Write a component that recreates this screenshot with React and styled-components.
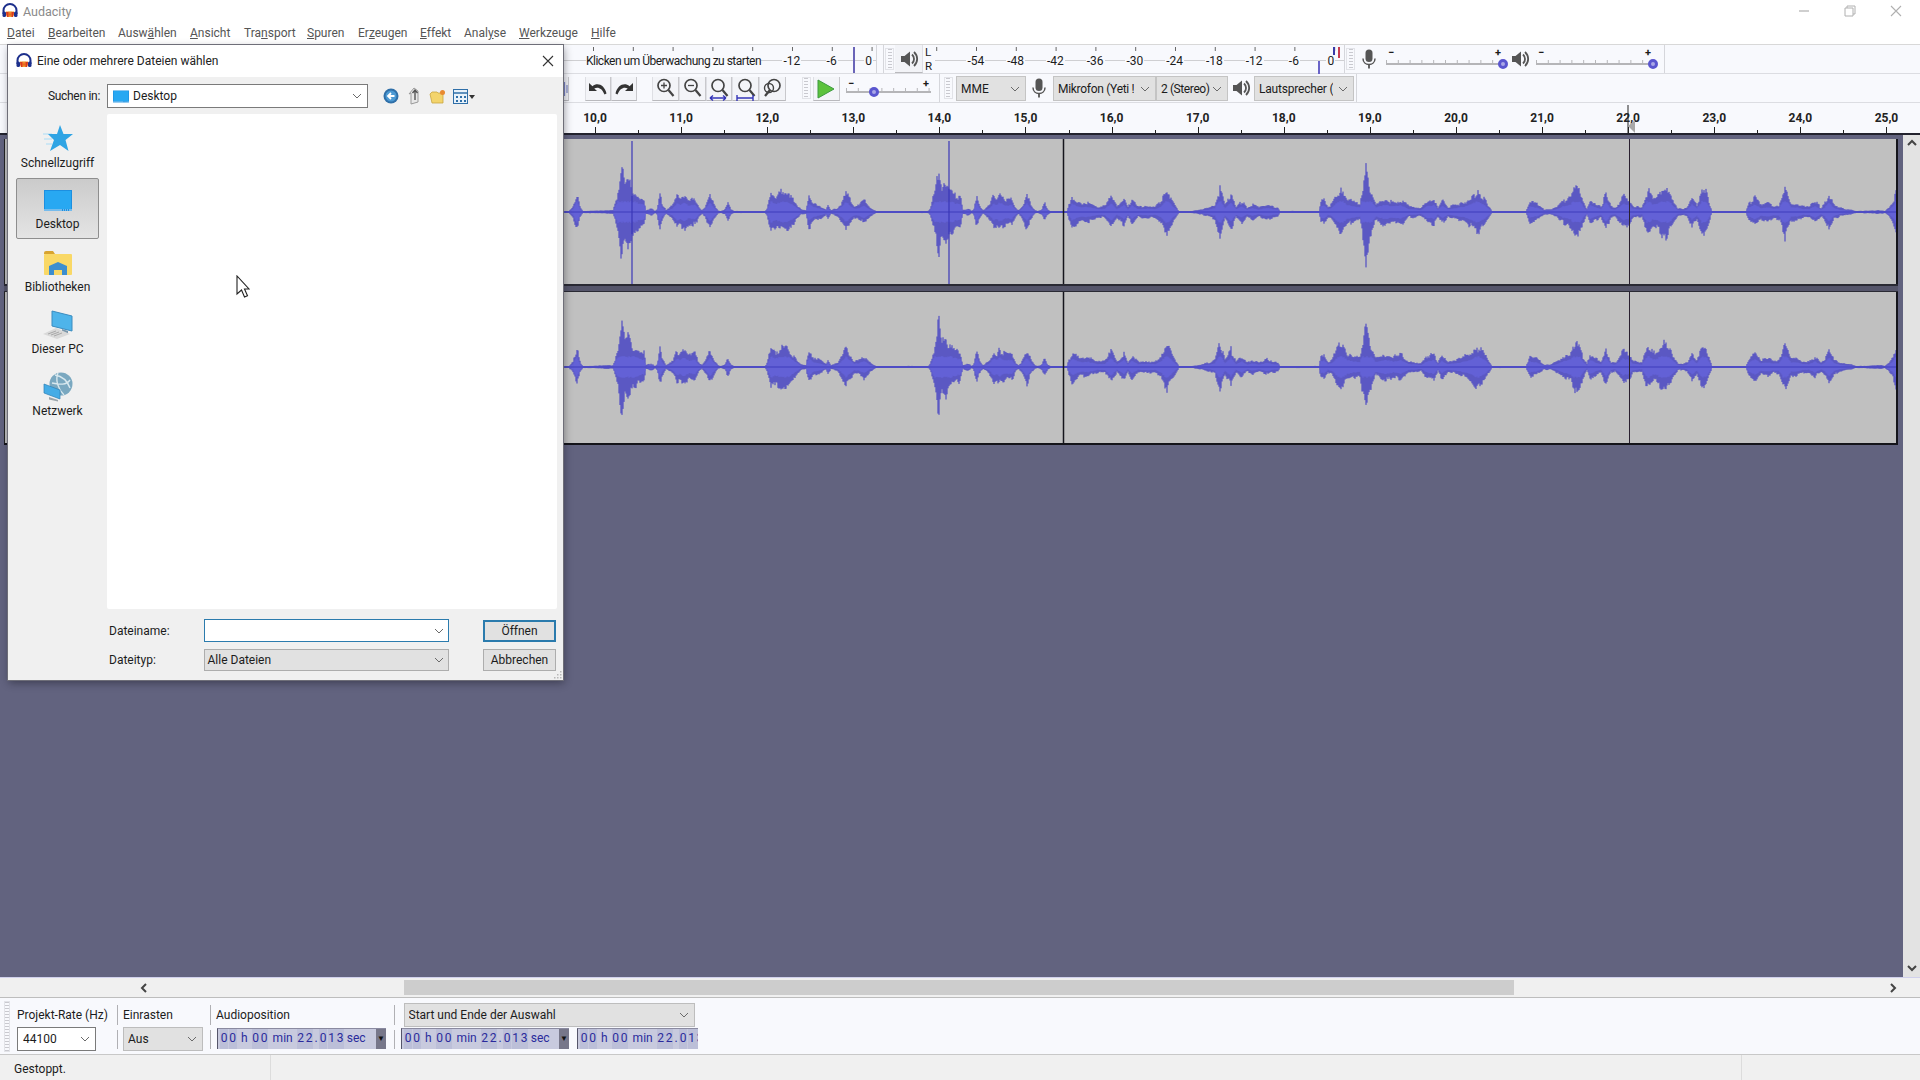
import React from "react";
import styled, { createGlobalStyle } from "styled-components";

const GlobalStyle = createGlobalStyle`
  html, body {
    margin: 0;
    padding: 0;
    width: 1920px;
    height: 1080px;
    overflow: hidden;
  }
  * {
    box-sizing: border-box;
  }
  body {
    font-family: Roboto, "Liberation Sans", sans-serif;
    font-size: 12px;
    color: #1c1c1c;
  }
`;

const MENU = [
  ["", "D", "atei", 41],
  ["", "B", "earbeiten", 70],
  ["Ausw", "ä", "hlen", 72],
  ["", "A", "nsicht", 54],
  ["Tra", "n", "sport", 63],
  ["", "S", "puren", 51],
  ["Er", "z", "eugen", 62],
  ["", "E", "ffekt", 44],
  ["Anal", "y", "se", 55],
  ["", "W", "erkzeuge", 72],
  ["", "H", "ilfe", 30],
];

const RULER = Array.from({ length: 16 }, (_, i) => `${i + 10},0`);
const PLAY_SCALE = ["-54", "-48", "-42", "-36", "-30", "-24", "-18", "-12", "-6"];

// waveform envelope: [x on screen, peak height]
const BLOCK_A = [
  [612, 2], [614, 9], [618, 28], [621, 55], [624, 27], [627, 38], [631, 24], [636, 20], [640, 17], [643, 16],
  [645, 2], [648, 3], [650, 4], [652, 3], [654, 1], [656, 3], [659, 20], [661, 10], [665, 2], [668, 4], [672, 8],
  [676, 18], [679, 15], [682, 20], [688, 14], [694, 15], [698, 5], [701, 2], [704, 6], [709, 19], [713, 9],
  [717, 2], [720, 1], [724, 3], [727, 10], [730, 3], [733, 1],
];
const BLOCK_B = [
  [764, 1], [766, 4], [770, 23], [775, 18], [780, 22], [787, 22], [793, 13], [800, 3], [805, 2], [808, 18],
  [813, 10], [820, 7], [825, 3], [827, 8], [830, 2], [837, 5], [841, 12], [845, 22], [849, 14], [853, 7], [858, 8],
  [863, 13], [869, 5], [875, 1],
];
const BLOCK_C = [
  [1066, 1], [1068, 8], [1071, 17], [1080, 10], [1087, 11], [1097, 6], [1104, 7], [1110, 18], [1116, 6], [1123, 15],
  [1127, 5], [1131, 14], [1137, 6], [1142, 7], [1148, 7], [1154, 6], [1160, 12], [1166, 25], [1172, 12], [1178, 1],
  [1190, 1], [1197, 2], [1208, 5], [1214, 8], [1219, 27], [1224, 8], [1230, 20], [1235, 6], [1241, 12], [1246, 5],
  [1252, 8], [1258, 5], [1266, 9], [1272, 6], [1277, 5], [1279, 1], [1318, 1], [1320, 12], [1323, 14], [1327, 6], [1331, 9],
  [1340, 27], [1346, 15], [1353, 12], [1359, 10], [1362, 30], [1365, 53], [1368, 30], [1375, 10], [1384, 15],
  [1392, 12], [1400, 14], [1408, 6], [1414, 6], [1420, 4], [1426, 12], [1433, 15], [1437, 5], [1441, 13], [1447, 6],
  [1455, 8], [1462, 11], [1470, 16], [1477, 23], [1484, 14], [1491, 1], [1525, 1], [1529, 12], [1536, 9], [1543, 3],
  [1550, 3], [1556, 6], [1562, 12], [1570, 16], [1576, 35], [1582, 12], [1586, 3], [1589, 15], [1594, 10], [1600, 6],
  [1605, 20], [1610, 6], [1614, 5], [1619, 12], [1622, 18], [1628, 15], [1632, 7], [1636, 6], [1641, 5], [1647, 25],
  [1652, 16], [1657, 18], [1663, 30], [1669, 20], [1677, 4], [1682, 3], [1686, 5], [1691, 16], [1696, 8], [1703, 28],
  [1708, 12], [1711, 1], [1745, 1], [1748, 10], [1754, 16], [1760, 8], [1767, 10], [1772, 7], [1778, 8], [1784, 28],
  [1790, 10], [1795, 10], [1802, 6], [1808, 6], [1814, 12], [1820, 5], [1824, 10], [1828, 20], [1833, 8], [1839, 5],
  [1845, 3], [1850, 3], [1855, 1], [1880, 2], [1884, 1], [1888, 5], [1892, 12], [1896, 26],
];
const ENVELOPE = [
  [563, 1], [568, 1], [572, 6], [576, 22], [579, 6], [582, 1],
  ...BLOCK_A,
  ...BLOCK_B,
  [926, 1],
  ...BLOCK_A.map(([x, a]) => [x + 316.7, a]),
  [1062, 1],
  ...BLOCK_C,
];

const peakAt = (x) => {
  for (let i = 1; i < ENVELOPE.length; i++) {
    const [x0, a0] = ENVELOPE[i - 1];
    const [x1, a1] = ENVELOPE[i];
    if (x <= x1) return a0 + ((a1 - a0) * (x - x0)) / (x1 - x0 || 1);
  }
  return 1;
};

const noise = (x, seed) => {
  const v = Math.sin(x * 12.9898 + seed * 78.233) * 43758.5453;
  return v - Math.floor(v);
};

// jagged edge: a coarse wobble over every 3px plus a fine one per column
const wobble = (x, seed) => 0.62 + 0.28 * noise(Math.floor(x / 3), seed) + 0.18 * noise(x, seed + 5);

const buildWave = (mid, seed) => {
  let dark = "";
  let light = "";
  for (let x = 560; x < 1893; x++) {
    const peak = peakAt(x + 4);
    const up = Math.max(1, peak * wobble(x, seed));
    const down = Math.max(1, peak * wobble(x + 40, seed));
    dark += `M${x} ${(mid - up).toFixed(1)}V${(mid + down).toFixed(1)}`;
    const inner = Math.min(peak * 0.5, 11) * (0.85 + 0.15 * noise(x + 7, seed));
    if (inner > 1) light += `M${x} ${(mid - inner).toFixed(1)}V${(mid + inner).toFixed(1)}`;
  }
  return { dark, light };
};

const Page = styled.div`
  position: relative;
  width: 1920px;
  height: 1080px;
  display: flex;
  flex-direction: column;
  overflow: hidden;
  background: #f8f9fd;
`;

const TitleBar = styled.div`
  flex: none;
  height: 22px;
  display: flex;
  align-items: center;
  padding-left: 2px;
  background: #fff;
`;

const AppTitle = styled.span`
  margin-left: 5px;
  color: #8a8a8a;
  font-size: 12.5px;
`;

const WindowButtons = styled.div`
  margin-left: auto;
  display: flex;
  align-items: center;
`;

const WindowButton = styled.div`
  width: 46px;
  display: flex;
  justify-content: center;
  padding-right: 2px;
`;

const MenuBar = styled.div`
  flex: none;
  height: 23px;
  display: flex;
  align-items: center;
  padding-left: 7px;
  background: #fff;
  border-bottom: 1px solid #d8d8d8;
`;

const MenuItem = styled.span`
  flex: none;
  width: ${(p) => p.$w}px;
  color: #555;
  font-size: 12px;
  white-space: nowrap;
`;

const ToolRow = styled.div`
  flex: none;
  height: ${(p) => p.$h || 29}px;
  display: flex;
  align-items: stretch;
  border-bottom: 1px solid #dcdde2;
  background: #f8f9fd;
`;

const Meter = styled.div`
  position: relative;
  flex: none;
  display: flex;
  align-items: center;
  margin-left: ${(p) => p.$left || 0}px;
  width: ${(p) => p.$w}px;
  padding-left: ${(p) => p.$pad || 0}px;
  height: 100%;
  padding-top: 3px;
  &::before {
    content: "";
    position: absolute;
    left: 0;
    right: 0;
    top: 15px;
    height: 1px;
    background: #cfcfd2;
  }
  &::after {
    content: "";
    position: absolute;
    left: 0;
    right: 0;
    top: 2px;
    height: 4px;
    background: linear-gradient(90deg, #666 1px, transparent 1px) ${(p) => p.$tick}px 0 / 39.8px 4px repeat-x;
  }
`;

const MeterHint = styled.span`
  position: relative;
  z-index: 1;
  flex: none;
  width: ${(p) => p.$w}px;
  white-space: nowrap;
`;

const MeterHintText = styled.span`
  background: #f8f9fd;
  letter-spacing: -0.5px;
`;

const MeterCell = styled.span`
  position: relative;
  z-index: 1;
  flex: none;
  width: ${(p) => p.$w || 39.75}px;
  padding-left: ${(p) => p.$pad || 0}px;
  text-align: center;
`;

const MeterNumber = styled.span`
  background: #f8f9fd;
  padding: 0 1px;
`;

const LevelBar = styled.div`
  position: absolute;
  z-index: 2;
  left: ${(p) => p.$x}px;
  top: ${(p) => p.$y}px;
  width: 2px;
  height: ${(p) => p.$h}px;
  background: ${(p) => p.$color};
`;

const Divider = styled.div`
  flex: none;
  width: 1px;
  background: #d5d6db;
  margin-left: ${(p) => p.$left || 0}px;
`;

const Grip = styled.div`
  flex: none;
  width: 9px;
  margin: 3px 0 3px ${(p) => p.$left || 0}px;
  border: 1px solid #e2e3e8;
  background: repeating-linear-gradient(180deg, #c9c9cf 0 1px, transparent 1px 3px) center / 4px 100% no-repeat;
`;

const IconSlot = styled.div`
  flex: none;
  width: ${(p) => p.$w}px;
  margin-left: ${(p) => p.$left || 0}px;
  display: flex;
  align-items: center;
  justify-content: center;
`;

const SpeakerButton = styled(IconSlot)`
  background: #f2f3f7;
  border-bottom: 1px solid #b9b9bd;
  border-right: 1px solid #dedfe4;
`;

const ChannelLabels = styled.div`
  flex: none;
  width: 10px;
  margin-left: 2px;
  display: flex;
  flex-direction: column;
  justify-content: space-between;
  padding: 0 0 1px;
  font-size: 11.5px;
  line-height: 14px;
`;

const SliderBox = styled.div`
  position: relative;
  flex: none;
  width: ${(p) => p.$w}px;
  margin-left: ${(p) => p.$left || 0}px;
  &::before {
    content: "";
    position: absolute;
    left: 0;
    right: 0;
    top: ${(p) => p.$line}px;
    height: 2px;
    background: #b5b5b8;
  }
  &::after {
    content: "";
    position: absolute;
    left: 0;
    right: 0;
    top: ${(p) => p.$line - 3}px;
    height: 3px;
    background: linear-gradient(90deg, #b5b5b8 1px, transparent 1px) 0 0 / 11.8px 3px repeat-x;
  }
`;

const SliderMark = styled.span`
  position: absolute;
  top: ${(p) => p.$top}px;
  ${(p) => (p.$end ? "right: 2px;" : "left: 2px;")}
  font-size: 11px;
  line-height: 11px;
  font-weight: 700;
`;

const SliderThumb = styled.div`
  position: absolute;
  z-index: 1;
  left: ${(p) => p.$x}px;
  top: ${(p) => p.$line - 4}px;
  width: 10px;
  height: 10px;
  border-radius: 50%;
  border: 3px solid #5a56cf;
  background: #a9a7e6;
`;

const ToolButton = styled.div`
  flex: none;
  width: ${(p) => p.$w || 26.8}px;
  margin: 3px 0 1px ${(p) => p.$left || 0}px;
  display: flex;
  align-items: center;
  justify-content: ${(p) => (p.$edge ? "flex-end" : "center")};
  background: #f3f4f8;
  border-right: 1px solid #c8c8cc;
  border-left: 1px solid #dedfe4;
  border-bottom: 1px solid #b9b9bd;
`;

const Combo = styled.div`
  flex: none;
  width: ${(p) => p.$w}px;
  height: ${(p) => p.$h || 24}px;
  margin-left: ${(p) => p.$left || 0}px;
  margin-top: ${(p) => p.$top || 0}px;
  align-self: center;
  display: flex;
  align-items: center;
  justify-content: space-between;
  gap: 2px;
  padding: 0 5px 0 ${(p) => p.$pad || 4}px;
  background: ${(p) => p.$bg || "#e1e1e1"};
  border: 1px solid ${(p) => p.$line || "#c4c4c4"};
  white-space: nowrap;
  overflow: hidden;
  font-size: 12px;
  svg {
    flex: none;
  }
`;

const ComboText = styled.span`
  overflow: hidden;
  letter-spacing: ${(p) => p.$tight || 0}px;
`;

const Ruler = styled.div`
  position: relative;
  flex: none;
  height: 30px;
  display: flex;
  padding-left: 552px;
  overflow: hidden;
  background: #f8f9fd;
`;

const RulerCell = styled.div`
  position: relative;
  flex: none;
  width: 86.1px;
  padding-top: 8px;
  text-align: center;
  font-weight: 700;
  font-size: 12px;
  line-height: 14px;
  color: #222;
  &::before {
    content: "";
    position: absolute;
    left: 0;
    bottom: 0;
    width: 1px;
    height: 3px;
    background: #222;
  }
  &::after {
    content: "";
    position: absolute;
    left: 43px;
    bottom: 0;
    width: 1px;
    height: 6px;
    background: #222;
  }
`;

const Playhead = styled.svg`
  position: absolute;
  left: 1627px;
  top: 2px;
`;

const TrackArea = styled.div`
  flex: none;
  height: 845px;
  display: flex;
  background: #62637f;
  border-top: 2px solid #23232e;
  border-bottom: 1px solid #d0d0ec;
`;

const TrackColumn = styled.div`
  flex: none;
  width: 1903px;
  padding: 4px 5px 0 4px;
`;

const Track = styled.div`
  height: ${(p) => p.$h}px;
  background: #c0c0c0;
  border-left: 1px solid #222;
  border-right: 2px solid #15151c;
`;

const TrackGap = styled.div`
  height: 8px;
  background: #55556a;
  border-top: 2px solid #2a2a34;
  border-bottom: 1px solid #2a2a34;
`;

const TrackEnd = styled.div`
  height: 2px;
  background: #14141a;
`;

const Wave = styled.svg`
  display: block;
`;

const VScroll = styled.div`
  flex: none;
  width: 17px;
  display: flex;
  flex-direction: column;
  align-items: center;
  justify-content: space-between;
  padding: 4px 0 3px;
  background: #e3e3e3;
`;

const HScroll = styled.div`
  flex: none;
  height: 19px;
  display: flex;
  align-items: center;
  padding: 0 21px 0 140px;
  background: #f0f0f0;
`;

const HThumb = styled.div`
  flex: none;
  width: 1110px;
  height: 15px;
  margin: 0 auto 0 254px;
  background: #cdcdcd;
`;

const SelectionBar = styled.div`
  flex: none;
  height: 58px;
  display: flex;
  padding: 5px 0 3px 4px;
  background: #f8f9fd;
  border-top: 1px solid #bdbdbd;
  border-bottom: 1px solid #c8c8c8;
`;

const SelGrip = styled.div`
  flex: none;
  width: 6px;
  margin: -2px 7px -1px 0;
  border: 1px solid #e2e3e8;
  background: repeating-linear-gradient(180deg, #c9c9cf 0 1px, transparent 1px 3px);
`;

const SelGroup = styled.div`
  flex: none;
  width: ${(p) => p.$w}px;
  display: flex;
  flex-direction: column;
`;

const SelLabel = styled.div`
  height: 24px;
  display: flex;
  align-items: center;
  white-space: nowrap;
  font-size: 12px;
`;

const SelRow = styled.div`
  height: 24px;
  margin-top: 1px;
  display: flex;
`;

const SelDivider = styled.div`
  flex: none;
  width: 1px;
  margin: 2px 5px 2px 0;
  background: linear-gradient(180deg, #b0b0b4 0 20px, transparent 20px 25px, #b0b0b4 25px);
`;

const TimeBox = styled.div`
  flex: none;
  width: ${(p) => p.$w}px;
  height: 21px;
  margin-left: ${(p) => p.$left || 0}px;
  display: flex;
  align-items: stretch;
  overflow: hidden;
  padding-left: 2px;
  background: #c8cade;
  border-left: 1px solid #55556a;
  border-top: 1px solid #8a8aa0;
  color: #2a2a9c;
  font-size: 12px;
  line-height: 19px;
`;

const TimeDigit = styled.span`
  flex: none;
  width: ${(p) => p.$w || 8}px;
  text-align: center;
  background: ${(p) => (p.$plain ? "transparent" : "#bcbfd8")};
  margin-right: 0.5px;
`;

const TimeUnit = styled.span`
  flex: none;
  padding: 0 ${(p) => p.$pad || 4}px;
  white-space: nowrap;
`;

const TimeMenu = styled.span`
  flex: none;
  width: 10px;
  margin-left: auto;
  background: #77778a;
  color: #111;
  font-size: 8px;
  text-align: center;
`;

const StatusBar = styled.div`
  flex: 1;
  min-height: 0;
  display: flex;
  background: #f0f0f0;
`;

const StatusCell = styled.div`
  flex: none;
  width: ${(p) => p.$w}px;
  display: flex;
  align-items: center;
  padding: 3px 0 0 ${(p) => p.$pad || 0}px;
  border-right: 1px solid #dcdcdc;
`;

const Dialog = styled.div`
  position: absolute;
  left: 8px;
  top: 45px;
  width: 555px;
  height: 635px;
  display: flex;
  flex-direction: column;
  background: #f0f0f0;
  box-shadow: 0 0 0 1px #6e6e78, 1px 3px 8px rgba(20, 20, 30, 0.45);
`;

const DialogTitle = styled.div`
  flex: none;
  height: 32px;
  display: flex;
  align-items: center;
  padding: 0 9px 0 8px;
  background: #fff;
  font-size: 12px;
  color: #222;
`;

const DialogCaption = styled.span`
  margin-left: 5px;
`;

const DialogClose = styled.div`
  margin-left: auto;
  display: flex;
`;

const LookRow = styled.div`
  flex: none;
  height: 37px;
  display: flex;
  align-items: center;
  padding: 1px 0 0;
`;

const LookLabel = styled.span`
  flex: none;
  width: 92px;
  text-align: right;
  letter-spacing: -0.3px;
`;

const LookCombo = styled.div`
  flex: none;
  width: 261px;
  height: 24px;
  margin-left: 7px;
  display: flex;
  align-items: center;
  padding: 0 5px;
  background: #fff;
  border: 1px solid #7a7a7a;
`;

const LookText = styled.span`
  margin-left: 4px;
`;

const LookChevron = styled.span`
  margin-left: auto;
  display: flex;
`;

const LookTools = styled.div`
  display: flex;
  align-items: center;
  margin-left: 15px;
  gap: 7px;
`;

const DialogMain = styled.div`
  flex: 1;
  min-height: 0;
  display: flex;
`;

const Sidebar = styled.div`
  flex: none;
  width: 99px;
  padding: 2px 0 0 8px;
  display: flex;
  flex-direction: column;
  gap: 1.5px;
`;

const Place = styled.div`
  height: 60.5px;
  width: 83px;
  display: flex;
  flex-direction: column;
  align-items: center;
  padding-top: ${(p) => (p.$active ? 6 : 7)}px;
  border: 1px solid ${(p) => (p.$active ? "#8e8e8e" : "transparent")};
  border-radius: 2px;
  background: ${(p) => (p.$active ? "linear-gradient(180deg, #cbcbcb, #e4e4e4)" : "none")};
`;

const PlaceIcon = styled.div`
  height: 30px;
  display: flex;
  align-items: center;
  justify-content: center;
`;

const PlaceLabel = styled.span`
  margin-top: 2px;
  line-height: 15px;
  white-space: nowrap;
`;

const FileList = styled.div`
  flex: 1;
  margin-right: 6px;
  background: #fff;
  border-radius: 2px;
`;

const FormArea = styled.div`
  flex: none;
  height: 71px;
  padding: 10px 7px 0 101px;
  display: flex;
  flex-direction: column;
  gap: 6px;
`;

const FormRow = styled.div`
  height: 23px;
  display: flex;
  align-items: center;
`;

const FormLabel = styled.span`
  flex: none;
  width: 94.5px;
`;

const FormField = styled.div`
  flex: none;
  width: 245.5px;
  height: ${(p) => p.$h}px;
  display: flex;
  align-items: center;
  justify-content: space-between;
  padding: 0 4px 0 3px;
  background: ${(p) => (p.$focus ? "#fff" : "#e1e1e1")};
  border: 1px solid ${(p) => (p.$focus ? "#2b7bad" : "#adadad")};
`;

const DialogButton = styled.div`
  flex: none;
  width: 73px;
  height: 22px;
  margin-left: 34px;
  display: flex;
  align-items: center;
  justify-content: center;
  background: #e1e1e1;
  border: ${(p) => (p.$primary ? "2px solid #2b7bad" : "1px solid #adadad")};
`;

const ResizeGrip = styled.svg`
  position: absolute;
  right: 1px;
  bottom: 1px;
`;

const Cursor = styled.svg`
  position: absolute;
  left: 236px;
  top: 275px;
`;

const Chevron = () => (
  <svg width="10" height="6" viewBox="0 0 10 6">
    <path d="M1 1l4 4 4-4" fill="none" stroke="#6a6a6a" strokeWidth="1" />
  </svg>
);

const AudacityLogo = ({ size = 16 }) => (
  <svg width={size} height={size} viewBox="0 0 16 16">
    <path d="M4 8.500h8v3l-1 2.500H5l-1-2.500z" fill="#f0a030" />
    <path d="M4 9h2.500v5H5zM9.500 9H12l-1 5H9.500z" fill="#d83820" />
    <path d="M6 11l1-3 1 4 1-4 1 3v1.500H6z" fill="#e86020" />
    <path d="M1.500 11V7.500a6.500 6.500 0 0 1 13 0V11" fill="none" stroke="#1c2f8c" strokeWidth="2" />
    <rect x="0.500" y="8.500" width="3.500" height="5.500" rx="1.500" fill="#1c2f8c" />
    <rect x="12" y="8.500" width="3.500" height="5.500" rx="1.500" fill="#1c2f8c" />
  </svg>
);

const SpeakerIcon = ({ size = 20 }) => (
  <svg width={size} height={size} viewBox="0 0 20 20">
    <path d="M2 7h3.500L11 2.500v15L5.500 13H2z" fill="#555" />
    <path d="M13 5.500c2.700 2.500 2.700 6.500 0 9" fill="none" stroke="#555" strokeWidth="1.800" />
    <path d="M15 3c4.200 4 4.200 10 0 14" fill="none" stroke="#555" strokeWidth="1.800" />
  </svg>
);

const MicIcon = ({ size = 20 }) => (
  <svg width={size} height={size} viewBox="0 0 20 20">
    <rect x="6.500" y="0.500" width="7" height="12.500" rx="3.500" fill="#555" />
    <path d="M4 9.500c0 8 12 8 12 0" fill="none" stroke="#555" strokeWidth="1.500" />
    <path d="M10 15.500v4" stroke="#555" strokeWidth="1.800" />
  </svg>
);

const UndoIcon = ({ flip }) => (
  <svg width="20" height="14" viewBox="0 0 20 14" style={flip ? { transform: "scaleX(-1)" } : undefined}>
    <path d="M1 1v8h8L6.300 6.500C9.500 4.500 14 5.800 16.500 12.500l2-1C16.500 3 9.500 0 4.500 4.200z" fill="#333" />
  </svg>
);

const ZoomIcon = ({ kind }) => (
  <svg width="22" height="24" viewBox="0 0 22 24">
    <circle cx={kind === "toggle" ? 12 : 10} cy="8.500" r="6" fill="none" stroke="#444" strokeWidth="1.700" />
    <path d={kind === "toggle" ? "M8 13l-5 6" : "M14.500 13l5 6"} stroke="#444" strokeWidth="2.200" />
    {kind === "in" && <path d="M7 8.500h6M10 5.500v6" stroke="#444" strokeWidth="1.300" />}
    {kind === "out" && <path d="M7 8.500h6" stroke="#444" strokeWidth="1.300" />}
    {kind === "toggle" && <circle cx="7" cy="11" r="4.500" fill="none" stroke="#444" strokeWidth="1.400" />}
    {kind === "sel" && <path d="M2 21h16M2 21l3-2.500M2 21l3 2.500M18 21l-3-2.500M18 21l-3 2.500" stroke="#3636b8" strokeWidth="1.400" fill="none" />}
    {kind === "fit" && <path d="M2 18v6M18 18v6M2 21h16" stroke="#3636b8" strokeWidth="1.400" fill="none" />}
  </svg>
);

const StarIcon = () => (
  <svg width="30" height="30" viewBox="0 0 30 30">
    <path d="M0 10h9M1 15h8M3 20h6" stroke="#a9dcf6" strokeWidth="1.200" />
    <path d="M17 1l3.500 9H30l-7.500 6 3 11-8.500-6-10 6 4-11-6-6h9z" fill="#2fa4e4" />
  </svg>
);

const DesktopIcon = ({ w = 28, h = 21 }) => (
  <svg width={w} height={h} viewBox="0 0 28 21">
    <rect x="0" y="0" width="28" height="21" fill="#1d8fe0" />
    <rect x="1" y="1" width="26" height="18" fill="#28a8f2" />
    <path d="M0 20h28" stroke="#cfe8f8" strokeWidth="1" strokeDasharray="18 1 1 1 1 1 1 1" />
  </svg>
);

const FolderIcon = () => (
  <svg width="30" height="26" viewBox="0 0 30 26">
    <path d="M1 3a2 2 0 0 1 2-2h7l2 3H1z" fill="#d8a430" />
    <rect x="1" y="4" width="28" height="21" rx="1" fill="#f9d866" />
    <path d="M6 25v-9l9-4 9 4v9h-5v-5h-8v5z" fill="#3c8ecf" />
    <rect x="11" y="20" width="8" height="5" fill="#f9d866" />
  </svg>
);

const PcIcon = () => (
  <svg width="32" height="30" viewBox="0 0 32 30">
    <path d="M10 1l20 5v15L10 16z" fill="#4eb4ea" stroke="#3a8cc0" strokeWidth="1" />
    <path d="M20 19l6 2v3l-6-1z" fill="#7a96aa" />
    <path d="M1 24l13-6 14 6-13 5z" fill="#d9d9d9" />
    <path d="M6 24l8-3M9 25l8-3M12 26l8-3" stroke="#a8a8a8" strokeWidth="1" />
  </svg>
);

const NetworkIcon = () => (
  <svg width="30" height="30" viewBox="0 0 30 30">
    <circle cx="18" cy="12" r="11.500" fill="#7aa8c0" />
    <path d="M12 3c6 1 12 5 15 13M9 11c6 1 14 3 18-3M15 1c-3 7 0 16 6 22" stroke="#d8e8ee" strokeWidth="1.400" fill="none" />
    <path d="M1 12l16 6v9L1 21z" fill="#45ace6" stroke="#2c80b4" strokeWidth="0.700" />
    <path d="M6 25l9 3v1.500l-9-2z" fill="#9aa4aa" />
  </svg>
);

const ScrollArrow = ({ dir }) => {
  const d = { up: "M1 6l4-4 4 4", down: "M1 2l4 4 4-4", left: "M6 1L2 5l4 4", right: "M2 1l4 4-4 4" }[dir];
  return (
    <svg width="10" height="10" viewBox="0 0 10 10">
      <path d={d} fill="none" stroke="#444" strokeWidth="2" />
    </svg>
  );
};

const Slider = ({ w, left, thumb, line, markTop }) => (
  <SliderBox $w={w} $left={left} $line={line}>
    <SliderMark $top={markTop}>−</SliderMark>
    <SliderMark $top={markTop} $end>+</SliderMark>
    <SliderThumb $x={thumb} $line={line} />
  </SliderBox>
);

const WaveTrack = ({ h, mid, seed, spikes }) => {
  const { dark, light } = React.useMemo(() => buildWave(mid, seed), [mid, seed]);
  return (
    <Track $h={h}>
      <Wave width="1891" height={h} viewBox={`0 0 1891 ${h}`}>
        <path d={dark} stroke="#3a36c4" strokeWidth="1" fill="none" />
        <path d={light} stroke="#6664dc" strokeWidth="1" fill="none" />
        <path d={`M556 ${mid}H1891`} stroke="#4a48c4" strokeWidth="1.500" />
        {spikes.map(([x, y1, y2], i) => (
          <path key={i} d={`M${x} ${y1}V${y2}`} stroke="#3a36b8" strokeWidth="1.200" />
        ))}
        <path d={`M1058.500 0V${h}`} stroke="#15151c" strokeWidth="1.500" />
        <path d={`M1624.500 0V${h}`} stroke="#2a2030" strokeWidth="1" />
      </Wave>
    </Track>
  );
};

const TimeField = ({ w, left, menu = true }) => (
  <TimeBox $w={w} $left={left}>
    <TimeDigit>0</TimeDigit>
    <TimeDigit>0</TimeDigit>
    <TimeUnit>h</TimeUnit>
    <TimeDigit>0</TimeDigit>
    <TimeDigit>0</TimeDigit>
    <TimeUnit>min</TimeUnit>
    <TimeDigit>2</TimeDigit>
    <TimeDigit>2</TimeDigit>
    <TimeDigit $plain $w={5}>.</TimeDigit>
    <TimeDigit>0</TimeDigit>
    <TimeDigit>1</TimeDigit>
    <TimeDigit>3</TimeDigit>
    <TimeUnit $pad={2}>sec</TimeUnit>
    {menu && <TimeMenu>▼</TimeMenu>}
  </TimeBox>
);

const App = () => {
  return (
    <Page>
      <GlobalStyle />
      <TitleBar>
        <AudacityLogo />
        <AppTitle>Audacity</AppTitle>
        <WindowButtons>
          <WindowButton>
            <svg width="12" height="12" viewBox="0 0 12 12">
              <path d="M1 6h10" stroke="#b0b0b0" strokeWidth="1.200" />
            </svg>
          </WindowButton>
          <WindowButton>
            <svg width="12" height="12" viewBox="0 0 12 12">
              <path d="M1 3h8v8H1zM3 3V1h8v8H9" fill="none" stroke="#b0b0b0" strokeWidth="1" />
            </svg>
          </WindowButton>
          <WindowButton>
            <svg width="12" height="12" viewBox="0 0 12 12">
              <path d="M1 1l10 10M11 1L1 11" stroke="#b0b0b0" strokeWidth="1.100" />
            </svg>
          </WindowButton>
        </WindowButtons>
      </TitleBar>

      <MenuBar>
        {MENU.map(([pre, key, post, w]) => (
          <MenuItem key={key + post} $w={w}>
            {pre}
            <u>{key}</u>
            {post}
          </MenuItem>
        ))}
      </MenuBar>

      <ToolRow>
        <Meter $left={560} $w={316} $pad={26} $tick={33}>
          <MeterHint $w={186}>
            <MeterHintText>Klicken um Überwachung zu starten</MeterHintText>
          </MeterHint>
          <MeterCell>
            <MeterNumber>-12</MeterNumber>
          </MeterCell>
          <MeterCell>
            <MeterNumber>-6</MeterNumber>
          </MeterCell>
          <MeterCell $w={24} $pad={10}>
            <MeterNumber>0</MeterNumber>
          </MeterCell>
          <LevelBar $x={293} $y={2} $h={26} $color="#6a64b8" />
        </Meter>
        <Divider />
        <Divider $left={6} />
        <Grip $left={1} />
        <SpeakerButton $w={28} $left={1}>
          <SpeakerIcon />
        </SpeakerButton>
        <ChannelLabels>
          <span>L</span>
          <span>R</span>
        </ChannelLabels>
        <Meter $w={409} $pad={21} $tick={41}>
          {PLAY_SCALE.map((n) => (
            <MeterCell key={n}>
              <MeterNumber>{n}</MeterNumber>
            </MeterCell>
          ))}
          <MeterCell $w={34}>
            <MeterNumber>0</MeterNumber>
          </MeterCell>
          <LevelBar $x={383} $y={16} $h={13} $color="#6a64c8" />
          <LevelBar $x={398} $y={2} $h={8} $color="#3a3aa8" />
          <LevelBar $x={403} $y={2} $h={11} $color="#c83c50" />
        </Meter>
        <Divider />
        <Grip $left={1} />
        <IconSlot $w={28}>
          <MicIcon />
        </IconSlot>
        <Slider w={117} left={3} thumb={112} line={18} markTop={2} />
        <IconSlot $w={26} $left={4}>
          <SpeakerIcon />
        </IconSlot>
        <Slider w={117} left={3} thumb={112} line={18} markTop={2} />
        <Divider $left={11} />
      </ToolRow>

      <ToolRow>
        <ToolButton $w={29} $left={540} $edge>
          <svg width="7" height="16" viewBox="0 0 7 16">
            <path d="M1 3v10M3.500 1v14M6 4v8" stroke="#7c86c8" strokeWidth="1.200" />
          </svg>
        </ToolButton>
        <ToolButton $w={26} $left={16}>
          <UndoIcon />
        </ToolButton>
        <ToolButton $w={26}>
          <UndoIcon flip />
        </ToolButton>
        <ToolButton $left={15}>
          <ZoomIcon kind="in" />
        </ToolButton>
        <ToolButton>
          <ZoomIcon kind="out" />
        </ToolButton>
        <ToolButton>
          <ZoomIcon kind="sel" />
        </ToolButton>
        <ToolButton>
          <ZoomIcon kind="fit" />
        </ToolButton>
        <ToolButton>
          <ZoomIcon kind="toggle" />
        </ToolButton>
        <Grip $left={16} />
        <ToolButton $w={27} $left={2}>
          <svg width="18" height="20" viewBox="0 0 18 20">
            <path d="M1 1l16 9-16 9z" fill="#5cc23c" stroke="#3d9a40" strokeWidth="1" />
          </svg>
        </ToolButton>
        <Slider w={85} left={6} thumb={23} line={17} markTop={4} />
        <Divider $left={8} />
        <Grip $left={4} />
        <Combo $w={70} $left={3} $h={25} $top={1}>
          <ComboText>MME</ComboText>
          <Chevron />
        </Combo>
        <IconSlot $w={27}>
          <MicIcon />
        </IconSlot>
        <Combo $w={103} $h={25} $top={1}>
          <ComboText $tight={-0.3}>Mikrofon (Yeti !</ComboText>
          <Chevron />
        </Combo>
        <Combo $w={72} $h={25} $top={1}>
          <ComboText $tight={-0.4}>2 (Stereo)</ComboText>
          <Chevron />
        </Combo>
        <IconSlot $w={26}>
          <SpeakerIcon />
        </IconSlot>
        <Combo $w={100} $h={25} $top={1}>
          <ComboText $tight={-0.2}>Lautsprecher (</ComboText>
          <Chevron />
        </Combo>
        <Divider $left={2} />
      </ToolRow>

      <Ruler>
        {RULER.map((t) => (
          <RulerCell key={t}>{t}</RulerCell>
        ))}
        <Playhead width="10" height="28" viewBox="0 0 10 28">
          <path d="M1 0v28" stroke="#222" strokeWidth="1" />
          <path d="M1 21l7-6v13z" fill="#a8a8a8" />
        </Playhead>
      </Ruler>

      <TrackArea>
        <TrackColumn>
          <WaveTrack h={145} mid={73} seed={1} spikes={[[627, 2, 145], [944, 2, 145]]} />
          <TrackGap />
          <WaveTrack h={151} mid={75} seed={2} spikes={[]} />
          <TrackEnd />
        </TrackColumn>
        <VScroll>
          <ScrollArrow dir="up" />
          <ScrollArrow dir="down" />
        </VScroll>
      </TrackArea>

      <HScroll>
        <ScrollArrow dir="left" />
        <HThumb />
        <ScrollArrow dir="right" />
      </HScroll>

      <SelectionBar>
        <SelGrip />
        <SelGroup $w={100}>
          <SelLabel>Projekt-Rate (Hz)</SelLabel>
          <SelRow>
            <Combo $w={79} $bg="#fff" $line="#7a7a7a" $pad={5}>
              <ComboText>44100</ComboText>
              <Chevron />
            </Combo>
          </SelRow>
        </SelGroup>
        <SelDivider />
        <SelGroup $w={87}>
          <SelLabel>Einrasten</SelLabel>
          <SelRow>
            <Combo $w={80} $line="#bdbdbd">
              <ComboText>Aus</ComboText>
              <Chevron />
            </Combo>
          </SelRow>
        </SelGroup>
        <SelDivider />
        <SelGroup $w={178}>
          <SelLabel>Audioposition</SelLabel>
          <SelRow>
            <TimeField w={169} left={1} />
          </SelRow>
        </SelGroup>
        <SelDivider />
        <SelGroup $w={298}>
          <Combo $w={291} $h={24} $line="#bdbdbd">
            <ComboText>Start und Ende der Auswahl</ComboText>
            <Chevron />
          </Combo>
          <SelRow>
            <TimeField w={168} left={1} />
            <TimeField w={121} left={8} menu={false} />
          </SelRow>
        </SelGroup>
      </SelectionBar>

      <StatusBar>
        <StatusCell $w={271} $pad={14}>
          Gestoppt.
        </StatusCell>
        <StatusCell $w={1471} />
      </StatusBar>

      <Dialog>
        <DialogTitle>
          <AudacityLogo />
          <DialogCaption>Eine oder mehrere Dateien wählen</DialogCaption>
          <DialogClose>
            <svg width="12" height="12" viewBox="0 0 12 12">
              <path d="M1 1l10 10M11 1L1 11" stroke="#333" strokeWidth="1.100" />
            </svg>
          </DialogClose>
        </DialogTitle>
        <LookRow>
          <LookLabel>Suchen in:</LookLabel>
          <LookCombo>
            <DesktopIcon w={16} h={13} />
            <LookText>Desktop</LookText>
            <LookChevron>
              <Chevron />
            </LookChevron>
          </LookCombo>
          <LookTools>
            <svg width="16" height="16" viewBox="0 0 16 16">
              <circle cx="8" cy="8" r="7.500" fill="#2f6fa8" />
              <circle cx="8" cy="8" r="5.500" fill="#4c9ad4" />
              <path d="M11.500 8H5M8 5L5 8l3 3" fill="none" stroke="#fff" strokeWidth="1.800" />
            </svg>
            <svg width="16" height="18" viewBox="0 0 16 18">
              <path d="M3 7l2-1v11l7-2V4L8 1z" fill="#e8e8e8" stroke="#9a9a9a" strokeWidth="1" />
              <path d="M9 13V3M6.500 6L9 3l2.500 3" fill="none" stroke="#555" strokeWidth="1.400" />
            </svg>
            <svg width="17" height="15" viewBox="0 0 17 15">
              <path d="M1 5l2-2h5l1 1h5v10H3z" fill="#f3d46c" stroke="#c8a440" strokeWidth="0.800" />
              <circle cx="13.500" cy="3.500" r="2.500" fill="#e88a30" />
            </svg>
            <svg width="22" height="15" viewBox="0 0 22 15">
              <rect x="0.500" y="0.500" width="14" height="14" fill="#e8f2fa" stroke="#2f6fa8" />
              <path d="M0 4h15" stroke="#2f6fa8" strokeWidth="1.500" />
              <path d="M3 7h2v2H3zM7 7h2v2H7zM11 7h2v2h-2zM3 11h2v2H3zM7 11h2v2H7zM11 11h2v2h-2z" fill="#2f6fa8" />
              <path d="M16 6h6l-3 4z" fill="#333" />
            </svg>
          </LookTools>
        </LookRow>
        <DialogMain>
          <Sidebar>
            <Place>
              <PlaceIcon>
                <StarIcon />
              </PlaceIcon>
              <PlaceLabel>Schnellzugriff</PlaceLabel>
            </Place>
            <Place $active>
              <PlaceIcon>
                <DesktopIcon />
              </PlaceIcon>
              <PlaceLabel>Desktop</PlaceLabel>
            </Place>
            <Place>
              <PlaceIcon>
                <FolderIcon />
              </PlaceIcon>
              <PlaceLabel>Bibliotheken</PlaceLabel>
            </Place>
            <Place>
              <PlaceIcon>
                <PcIcon />
              </PlaceIcon>
              <PlaceLabel>Dieser PC</PlaceLabel>
            </Place>
            <Place>
              <PlaceIcon>
                <NetworkIcon />
              </PlaceIcon>
              <PlaceLabel>Netzwerk</PlaceLabel>
            </Place>
          </Sidebar>
          <FileList />
        </DialogMain>
        <FormArea>
          <FormRow>
            <FormLabel>Dateiname:</FormLabel>
            <FormField $focus $h={23}>
              <span />
              <Chevron />
            </FormField>
            <DialogButton $primary>Öffnen</DialogButton>
          </FormRow>
          <FormRow>
            <FormLabel>Dateityp:</FormLabel>
            <FormField $h={22}>
              <span>Alle Dateien</span>
              <Chevron />
            </FormField>
            <DialogButton>Abbrechen</DialogButton>
          </FormRow>
        </FormArea>
        <ResizeGrip width="9" height="9" viewBox="0 0 9 9">
          <path d="M7 1h1.500v1.500H7zM4 4h1.500v1.500H4zM7 4h1.500v1.500H7zM1 7h1.500v1.500H1zM4 7h1.500v1.500H4zM7 7h1.500v1.500H7z" fill="#b8b8b8" />
        </ResizeGrip>
      </Dialog>

      <Cursor width="14" height="23" viewBox="0 0 14 23">
        <path d="M1 1v18l4.500-4 3 7 3-1.300-3-6.700H13z" fill="#fff" stroke="#222" strokeWidth="1.100" />
      </Cursor>
    </Page>
  );
};

export default App;
